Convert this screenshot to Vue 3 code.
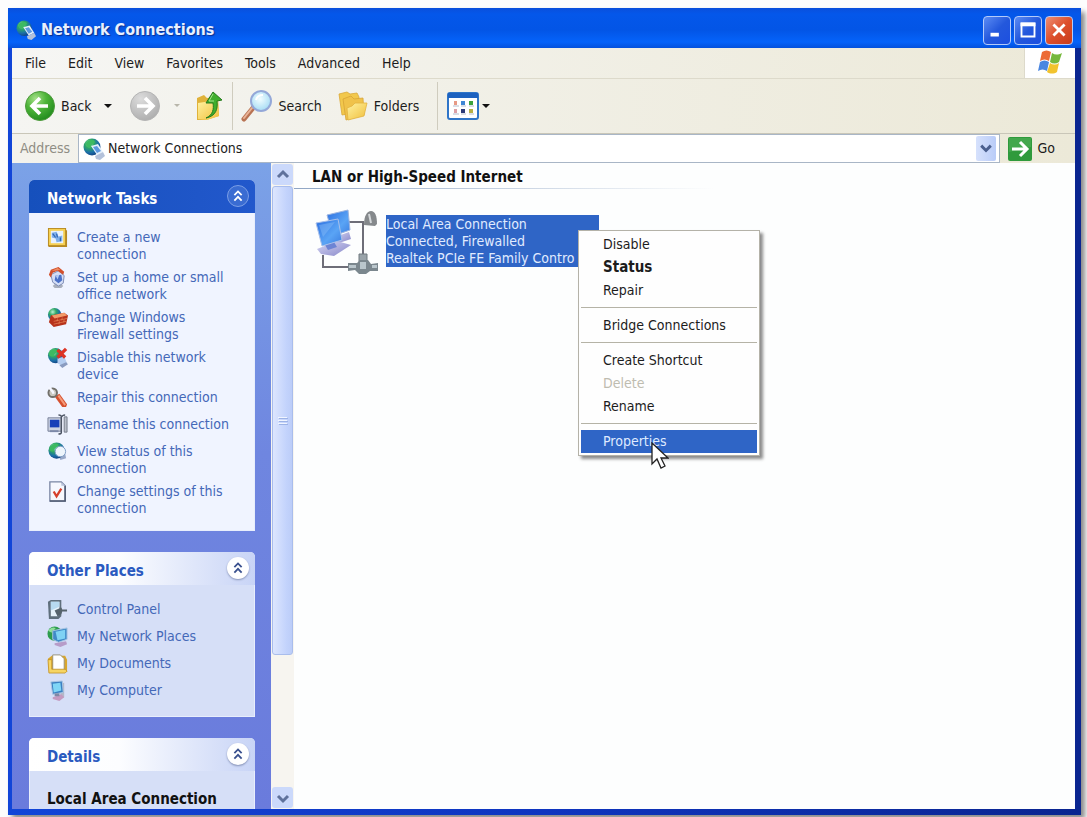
<script setup>
const menus = ['File', 'Edit', 'View', 'Favorites', 'Tools', 'Advanced', 'Help']

const tasks = [
  { icon: 'i-create', label: 'Create a new connection' },
  { icon: 'i-home', label: 'Set up a home or small office network' },
  { icon: 'i-firewall', label: 'Change Windows Firewall settings' },
  { icon: 'i-disable', label: 'Disable this network device' },
  { icon: 'i-repair', label: 'Repair this connection' },
  { icon: 'i-rename', label: 'Rename this connection' },
  { icon: 'i-status', label: 'View status of this connection' },
  { icon: 'i-settings', label: 'Change settings of this connection' },
]

const places = [
  { icon: 'i-control', label: 'Control Panel' },
  { icon: 'i-netplaces', label: 'My Network Places' },
  { icon: 'i-documents', label: 'My Documents' },
  { icon: 'i-computer', label: 'My Computer' },
]

const contextGroups = [
  [{ label: 'Disable' }, { label: 'Status', bold: true }, { label: 'Repair' }],
  [{ label: 'Bridge Connections' }],
  [{ label: 'Create Shortcut' }, { label: 'Delete', disabled: true }, { label: 'Rename' }],
  [{ label: 'Properties', active: true }],
]
</script>

<template>
  <div class="desktop">
    <svg class="defs" width="0" height="0" aria-hidden="true">
      <defs>
        <radialGradient id="g-globe" cx="35%" cy="30%" r="75%">
          <stop offset="0" stop-color="#b8f0d0" /><stop offset=".35" stop-color="#2fa865" />
          <stop offset=".7" stop-color="#1b6fa8" /><stop offset="1" stop-color="#123f80" />
        </radialGradient>
        <radialGradient id="g-green" cx="35%" cy="25%" r="80%">
          <stop offset="0" stop-color="#a6e08a" /><stop offset=".45" stop-color="#4fb53a" /><stop offset="1" stop-color="#1f8a1c" />
        </radialGradient>
        <radialGradient id="g-grey" cx="35%" cy="25%" r="80%">
          <stop offset="0" stop-color="#dcdcdc" /><stop offset="1" stop-color="#adadad" />
        </radialGradient>
        <linearGradient id="g-folder" x1="0" y1="0" x2="1" y2="1">
          <stop offset="0" stop-color="#fff2a0" /><stop offset="1" stop-color="#f0be3a" />
        </linearGradient>
        <linearGradient id="g-screen" x1="0" y1="0" x2="1" y2="1">
          <stop offset="0" stop-color="#2c6fe0" /><stop offset=".6" stop-color="#5aa4f5" /><stop offset="1" stop-color="#3a7ce0" />
        </linearGradient>
        <radialGradient id="g-lens" cx="45%" cy="40%" r="60%">
          <stop offset="0" stop-color="#f2fdff" /><stop offset="1" stop-color="#a6dcf5" />
        </radialGradient>
        <linearGradient id="g-base" x1="0" y1="0" x2="1" y2="1">
          <stop offset="0" stop-color="#d8d8f4" /><stop offset="1" stop-color="#8585c8" />
        </linearGradient>
      </defs>
      <symbol id="i-net" viewBox="0 0 22 22">
        <circle cx="9" cy="9" r="8.5" fill="url(#g-globe)" />
        <path d="M3 5c3-4 8-4 9-1-1 2-4 2-4 5-3 1-5 0-5-4z" fill="#3dba62" />
        <path d="M8 8l7-2 5 8-6 3z" fill="#e4f0fb" />
        <path d="M10 9l4-1 4 5-4 2z" fill="#5c98e0" />
        <path d="M12 18l8-4 2 4-5 4-4-1z" fill="#b3c1da" />
      </symbol>
      <symbol id="i-create" viewBox="0 0 22 22">
        <path d="M1 1h19v2l1 1v17H2L1 20z" fill="#b68a24" />
        <path d="M2 2h17v17H2z" fill="#f6d052" />
        <path d="M4 4h13v13H4z" fill="#e8f2fd" />
        <path d="M5 6l5-1 2 5 4-1v6l-6 1-1-4-4-1z" fill="#7fb0ea" />
        <path d="M6 7l3 4M10 7l1 4M14 11v4" stroke="#2f65b4" stroke-width="1.3" />
      </symbol>
      <symbol id="i-home" viewBox="0 0 22 22">
        <path d="M6 20l3-3h5l3 3-2 2H8z" fill="#a9afbc" />
        <path d="M4 8l8-4 6 5-1 8-5 3-6-4z" fill="#d4def6" stroke="#7e8cb2" />
        <path d="M9 9l6-1 1 6-4 3-4-3z" fill="#4a70c8" />
        <path d="M9 9l4-1-2 5z" fill="#b4ccf6" />
        <path d="M2 8l2-5 8-3 6 5-1 3-6-4-5 2-2 5z" fill="#d2502c" />
        <path d="M5 4l6-3 3 2-6 1z" fill="#ee8c64" />
      </symbol>
      <symbol id="i-firewall" viewBox="0 0 22 22">
        <circle cx="8" cy="8" r="7" fill="url(#g-globe)" />
        <path d="M4 9l14-3 4 3-2 9-13 3-5-5z" fill="#b7321b" />
        <path d="M5 9l13-3 3 3-13 3z" fill="#f39a68" />
        <path d="M7 15l14-3M7 18l13-3M11 12l-.5 3M16 11l-.5 3M13 15l-.5 3M18 13l-.5 3" stroke="#e88a5c" stroke-width=".7" />
      </symbol>
      <symbol id="i-disable" viewBox="0 0 22 22">
        <circle cx="9" cy="9" r="8" fill="url(#g-globe)" />
        <path d="M2 6c3-5 8-4 9-2-1 3-4 3-4 6-3 0-5 0-5-4z" fill="#3dba62" />
        <path d="M11 12l7-2 3 7-5 3-5-3z" fill="#b5cdf0" />
        <path d="M13 19l7-3 2 2-6 4z" fill="#8a9bc0" />
        <path d="M11 3l8 8M20 2l-9 9" stroke="#dd3324" stroke-width="3.4" />
      </symbol>
      <symbol id="i-repair" viewBox="0 0 22 22">
        <path d="M8 10l5-3 8 11-1 3-4 0z" fill="#d5502f" />
        <path d="M12 9l7 10" stroke="#f59b7a" stroke-width="2" />
        <circle cx="6" cy="6" r="4.5" fill="#c9c7c0" stroke="#716f6a" stroke-width="2" />
        <path d="M2 0l4 5 1 2" fill="none" stroke="#f4f6ff" stroke-width="2.6" />
      </symbol>
      <symbol id="i-rename" viewBox="0 0 22 22">
        <path d="M1 4h14v14H1z" fill="#ccd2e0" stroke="#777f98" />
        <path d="M3 6h10v8H3z" fill="#173fb8" />
        <path d="M3 17h9v2H3z" fill="#7c88a8" />
        <path d="M18 3h3v16h-3z" fill="#b9bfca" stroke="#737a88" />
        <path d="M12 1c2 0 3 0 3 2v16c0 2-1 2-3 2M19 1c-2 0-3 0-3 2" fill="none" stroke="#4c5464" stroke-width="1.6" />
      </symbol>
      <symbol id="i-status" viewBox="0 0 22 22">
        <path d="M12 15l7-2 1 5-6 2z" fill="#98a8c8" />
        <circle cx="10" cy="10" r="8.5" fill="url(#g-globe)" />
        <path d="M3 7c3-5 8-5 9-3-1 3-5 3-5 7-3 0-5 0-4-4z" fill="#3dba62" />
        <circle cx="14" cy="11" r="5.5" fill="#edf5fc" stroke="#7d9cc4" />
      </symbol>
      <symbol id="i-settings" viewBox="0 0 22 22">
        <path d="M3 1h12l4 4v16H3z" fill="#f6f8fe" stroke="#7a86a4" stroke-width="1.4" />
        <path d="M19 5v16H3" fill="none" stroke="#4f5970" stroke-width="1.6" />
        <path d="M15 1v4h4z" fill="#b9c3da" />
        <path d="M7 11l3 5 5-8" fill="none" stroke="#d6402c" stroke-width="2.4" />
      </symbol>
      <symbol id="i-control" viewBox="0 0 22 22">
        <path d="M1 3l3-2h11v17l-3 3H2z" fill="#5f6f7c" />
        <path d="M4 3h9v13l-2 2H4z" fill="#e6f2fa" />
        <path d="M4 3h9v5l-9 4z" fill="#b7daf0" />
        <path d="M8 12l7-3 1 2h5v2h-5l-1 3-4 2z" fill="#56636c" />
      </symbol>
      <symbol id="i-netplaces" viewBox="0 0 22 22">
        <circle cx="8" cy="8" r="7.5" fill="#2c9c4e" />
        <path d="M1 5c3-4 6-4 8-3-1 3-4 2-4 5z" fill="#8fdd9a" />
        <path d="M6 5l15-3v12l-9 3-6-3z" fill="#3f8ac8" stroke="#a8c4e2" />
        <path d="M9 6l10-2v9l-8 2z" fill="#7fd2f4" />
        <path d="M8 18l12-2 1 3-7 3-6-2z" fill="#b79cc8" />
      </symbol>
      <symbol id="i-documents" viewBox="0 0 22 22">
        <path d="M1 6l4-3h14l2 4v13H2z" fill="#d9a62c" />
        <path d="M6 2h8l4 4v12H6z" fill="#fff" stroke="#98927a" />
        <path d="M1 7h4v10h14l2 2-2 2H2z" fill="#f6d564" stroke="#c08e20" stroke-width=".8" />
      </symbol>
      <symbol id="i-computer" viewBox="0 0 22 22">
        <path d="M14 4l4-1v15l-4 2z" fill="#b4b8c8" />
        <path d="M4 2l12-1 1 12-11 2z" fill="#3b80c2" stroke="#a9c6e4" />
        <path d="M6 4l8-1 1 8-8 2z" fill="#7fd6f6" />
        <path d="M6 18l9-3 3 3-5 4-7-2z" fill="#c49ac0" />
        <path d="M8 14h5v3H8z" fill="#7f88a4" />
      </symbol>
      <symbol id="i-chevrons" viewBox="0 0 22 22">
        <path d="M7 10l4-4 4 4M7 16l4-4 4 4" fill="none" stroke="currentColor" stroke-width="2" />
      </symbol>
    </svg>

    <div class="window">
      <header class="titlebar">
        <svg class="title-icon" viewBox="0 0 22 22" aria-hidden="true"><use href="#i-net" /></svg>
        <h1>Network Connections</h1>
        <div class="controls">
          <button type="button" class="ctl" aria-label="Minimize">
            <svg viewBox="0 0 28 28"><path d="M7 17h9v4H7z" fill="#fff" /></svg>
          </button>
          <button type="button" class="ctl" aria-label="Maximize">
            <svg viewBox="0 0 28 28"><path d="M7 7h14v14H7z" fill="none" stroke="#fff" stroke-width="2" /><path d="M6 6h16v4H6z" fill="#fff" /></svg>
          </button>
          <button type="button" class="ctl close" aria-label="Close">
            <svg viewBox="0 0 28 28"><path d="M8 8l12 12M20 8L8 20" stroke="#fff" stroke-width="3" /></svg>
          </button>
        </div>
      </header>

      <div class="client">
        <nav class="menubar">
          <button v-for="m in menus" :key="m" type="button">{{ m }}</button>
          <div class="flag">
            <svg viewBox="0 0 26 24" aria-hidden="true">
              <path d="M5 2c3-2 6-2 9 0l-2 9c-3-2-6-2-9 0z" fill="#ec6a35" />
              <path d="M15 3c3 2 6 2 10 0l-3 9c-3 2-6 2-9 0z" fill="#76b83c" />
              <path d="M3 12c3-2 6-2 9 0l-2 9c-3-2-6-2-9 0z" fill="#4a86e0" />
              <path d="M13 13c3 2 6 2 9 0l-2 9c-3 2-7 2-10 0z" fill="#f2c32e" />
            </svg>
          </div>
        </nav>

        <div class="toolbar">
          <button type="button" class="tool">
            <svg class="round" viewBox="0 0 30 30" aria-hidden="true">
              <circle cx="15" cy="15" r="14.5" fill="url(#g-green)" stroke="#4e9a3c" />
              <path d="M15 7l-8 8 8 8M7 15h16" fill="none" stroke="#fff" stroke-width="3.6" />
            </svg>
            <span>Back</span>
          </button>
          <button type="button" class="tool arrow back-arrow" aria-label="Back history">
            <svg viewBox="0 0 8 6"><path d="M0 1h8L4 5z" fill="#111" /></svg>
          </button>
          <button type="button" class="tool forward" aria-label="Forward" disabled>
            <svg class="round" viewBox="0 0 30 30">
              <circle cx="15" cy="15" r="14.5" fill="url(#g-grey)" stroke="#b4b4b4" />
              <path d="M15 7l8 8-8 8M23 15H7" fill="none" stroke="#fff" stroke-width="3.6" />
            </svg>
          </button>
          <button type="button" class="tool arrow forward-arrow" aria-label="Forward history" disabled>
            <svg viewBox="0 0 8 6"><path d="M1 1h6L4 4z" fill="#b8b6aa" /></svg>
          </button>
          <button type="button" class="tool up" aria-label="Up">
            <svg class="up-icon" viewBox="0 0 26 30">
              <path d="M1 7l7-3 3 3 11-2 1 20-13 4-9 0z" fill="#e0b23a" />
              <path d="M2 12l13-2 7 0 1 15-12 4-9-1z" fill="url(#g-folder)" />
              <path d="M10 27c7-3 8-9 7-15h-7L17 1l9 8-5 1c1 8-1 15-11 17z" fill="#3fae2e" stroke="#257a1c" />
              <path d="M17 3l-4 7h5" fill="none" stroke="#a6e38c" />
            </svg>
          </button>
          <span class="divider" />
          <button type="button" class="tool">
            <svg class="search-icon" viewBox="0 0 32 32" aria-hidden="true">
              <path d="M12 18L3 29" stroke="#b87353" stroke-width="5" stroke-linecap="round" />
              <path d="M11 18L3 28" stroke="#eab497" stroke-width="2" stroke-linecap="round" />
              <circle cx="20" cy="11" r="10" fill="url(#g-lens)" stroke="#94a8d8" stroke-width="2" />
              <path d="M15 10c1-4 4-5 7-5" fill="none" stroke="#fff" stroke-width="2" />
            </svg>
            <span>Search</span>
          </button>
          <button type="button" class="tool folders">
            <svg class="round" viewBox="0 0 30 30" aria-hidden="true">
              <path d="M1 3l8-2 3 2 7-1 2 4-1 15-16 3z" fill="#f2c84c" stroke="#dba93a" stroke-width=".8" />
              <path d="M5 8l8-3 3 3 9-1 1 17-18 5z" fill="#f0c24a" stroke="#d8a436" stroke-width=".8" />
              <path d="M9 17l5-2 3-3 12 0-3 13-16 4z" fill="url(#g-folder)" stroke="#e2b240" stroke-width=".8" />
            </svg>
            <span>Folders</span>
          </button>
          <span class="divider wide" />
          <button type="button" class="tool views" aria-label="Views">
            <svg class="views-icon" viewBox="0 0 32 28">
              <rect x="1" y="1" width="30" height="26" rx="2" fill="#fff" stroke="#2f75c8" stroke-width="2" />
              <path d="M1 1h30v5H1z" fill="#1d62c0" />
              <path d="M7 9h3v4H7z" fill="#e79a86" /><path d="M14 9h4v4h-4z" fill="#3f86d4" /><path d="M22 9h4v4h-4z" fill="#3ca23c" />
              <path d="M7 17h3v4H7z" fill="#dca0a6" /><path d="M14 17h4v4h-4z" fill="#2b3a78" /><path d="M22 17h4v4h-4z" fill="#b7b045" />
              <path d="M6 14h6M14 14h5M22 14h5M6 22h6M14 22h5M22 22h5" stroke="#b4bccc" />
            </svg>
            <svg class="mini" viewBox="0 0 8 6"><path d="M0 1h8L4 5z" fill="#111" /></svg>
          </button>
        </div>

        <div class="addressbar">
          <label for="address">Address</label>
          <div class="field">
            <svg viewBox="0 0 22 22" aria-hidden="true"><use href="#i-net" /></svg>
            <input id="address" type="text" value="Network Connections" />
            <button type="button" class="drop" aria-label="Show addresses">
              <svg viewBox="0 0 20 26"><path d="M5 10l5 5 5-5" fill="none" stroke="#4a5f8e" stroke-width="3" /></svg>
            </button>
          </div>
          <button type="button" class="go">
            <svg viewBox="0 0 24 24" aria-hidden="true">
              <rect width="24" height="24" rx="2" fill="#2f9a3c" />
              <path d="M1 1h22v9L1 15z" fill="#58b45e" opacity=".5" />
              <path d="M12 5l7 7-7 7M19 12H4" fill="none" stroke="#fff" stroke-width="3" />
            </svg>
            <span>Go</span>
          </button>
        </div>

        <div class="content">
          <aside class="sidebar">
            <section class="pane primary">
              <header>
                <h2>Network Tasks</h2>
                <button type="button" class="fold" aria-label="Collapse Network Tasks"><svg viewBox="0 0 22 22"><use href="#i-chevrons" /></svg></button>
              </header>
              <ul>
                <li v-for="t in tasks" :key="t.label">
                  <svg viewBox="0 0 22 22" aria-hidden="true"><use :href="'#' + t.icon" /></svg>
                  <a href="#">{{ t.label }}</a>
                </li>
              </ul>
            </section>

            <section class="pane">
              <header>
                <h2>Other Places</h2>
                <button type="button" class="fold" aria-label="Collapse Other Places"><svg viewBox="0 0 22 22"><use href="#i-chevrons" /></svg></button>
              </header>
              <ul>
                <li v-for="p in places" :key="p.label">
                  <svg viewBox="0 0 22 22" aria-hidden="true"><use :href="'#' + p.icon" /></svg>
                  <a href="#">{{ p.label }}</a>
                </li>
              </ul>
            </section>

            <section class="pane">
              <header>
                <h2>Details</h2>
                <button type="button" class="fold" aria-label="Collapse Details"><svg viewBox="0 0 22 22"><use href="#i-chevrons" /></svg></button>
              </header>
              <p class="detail">Local Area Connection</p>
            </section>
          </aside>

          <div class="scrollbar">
            <button type="button" aria-label="Scroll up">
              <svg viewBox="0 0 20 20"><path d="M5 12l5-5 5 5" fill="none" stroke="#5f729c" stroke-width="3" /></svg>
            </button>
            <div class="track">
              <div class="thumb"><i /><i /><i /></div>
            </div>
            <button type="button" aria-label="Scroll down">
              <svg viewBox="0 0 20 20"><path d="M5 8l5 5 5-5" fill="none" stroke="#5f729c" stroke-width="3" /></svg>
            </button>
          </div>

          <main>
            <h2 class="group">LAN or High-Speed Internet</h2>
            <div class="connection">
              <svg class="lan" viewBox="0 0 66 66" aria-hidden="true">
                <path d="M34 13h14v35M8 46v12h28" fill="none" stroke="#6e6e78" stroke-width="2" />
                <path d="M49 16c0-9 3-14 7-14s6 5 6 13l-2 2z" fill="#85898c" />
                <path d="M54 5l2 9" stroke="#d4d8da" stroke-width="2" />
                <path d="M20 28l14-5 2 7-12 4z" fill="url(#g-base)" />
                <path d="M12 6l21-5 2 20-17 6z" fill="url(#g-screen)" stroke="#9cb4e0" />
                <path d="M2 40l20-8 14 4-17 11-13-2z" fill="url(#g-base)" />
                <path d="M10 36l9-3 3 5-9 3z" fill="#6d84d4" />
                <path d="M1 14l22-4 4 21-20 6z" fill="url(#g-screen)" stroke="#a9c0ea" />
                <path d="M4 16l16-3-12 15z" fill="#8fc4fb" opacity=".4" />
                <path d="M44 45h8v10h-8z" fill="#9aa4aa" stroke="#717a80" />
                <path d="M33 54l9 0 3-3h8l3 4 7-1v8l-8 0-4 3h-7l-4-4-7 1z" fill="#7b878e" />
                <path d="M34 56h7v3h-7zM45 53h6v7h-6zM57 56h5v3h-5z" fill="#bac6cc" />
              </svg>
              <div class="selected">
                <span>Local Area Connection</span>
                <span>Connected, Firewalled</span>
                <span>Realtek PCIe FE Family Contro</span>
              </div>
            </div>

            <div class="context" role="menu">
              <div v-for="(group, gi) in contextGroups" :key="gi" class="context-group">
                <button
                  v-for="item in group"
                  :key="item.label"
                  type="button"
                  role="menuitem"
                  :disabled="item.disabled"
                  :class="{ bold: item.bold, active: item.active }"
                >{{ item.label }}</button>
              </div>
              <svg class="pointer" viewBox="0 0 18 28" aria-hidden="true">
                <path d="M1 1v21l5-5 4 9 4-2-4-8h7z" fill="#fff" stroke="#222" stroke-width="1.3" />
              </svg>
            </div>
          </main>
        </div>
      </div>
    </div>
  </div>
</template>

<style>
body {
  margin: 0;
  background: #fdfdfd;
}
</style>

<style scoped>
* {
  box-sizing: border-box;
}
.desktop {
  height: 100vh;
  padding: 8px 6px 2px 8px;
  overflow: hidden;
  font-family: "DejaVu Sans Condensed", "DejaVu Sans", "Noto Sans", sans-serif;
  font-size: 14px;
  line-height: 17px;
  color: #1c1c1c;
}
.defs {
  position: absolute;
}
button {
  display: flex;
  align-items: center;
  margin: 0;
  padding: 0;
  border: 0;
  background: none;
  font: inherit;
  color: inherit;
  white-space: nowrap;
}
svg {
  display: block;
  flex: none;
}
h1, h2, p, ul {
  margin: 0;
  padding: 0;
}
.window {
  display: flex;
  flex-direction: column;
  height: 100%;
  padding: 0 6px 6px 4px;
  background: linear-gradient(90deg, #1145d8, #0f35c0 50%, #0a2590);
  box-shadow: 4px 4px 5px #8a8a8a;
}
.titlebar {
  display: flex;
  align-items: center;
  height: 40px;
  flex: none;
  margin: 0 -6px 0 -4px;
  padding: 4px 8px 0;
  background: linear-gradient(180deg, #0a4fdc 0, #0457ea 15%, #0355e6 55%, #0563fa 85%, #0451dc 100%);
}
.title-icon {
  width: 20px;
  height: 20px;
}
.titlebar h1 {
  flex: 1;
  margin-left: 5px;
  font-size: 16px;
  line-height: 22px;
  color: #e8f0ff;
  text-shadow: 1px 1px 1px #0a2f90;
}
.controls {
  display: flex;
  gap: 3px;
}
.ctl {
  width: 28px;
  height: 29px;
  justify-content: center;
  border: 1px solid #b4cbfa;
  border-radius: 4px;
  background: linear-gradient(135deg, #5c8cf4, #2458dc 50%, #1c4fe0);
}
.ctl svg {
  width: 26px;
  height: 26px;
}
.ctl.close {
  background: linear-gradient(135deg, #ee8f74, #dd4f2c 50%, #c83c1c);
}
.client {
  display: flex;
  flex-direction: column;
  flex: 1;
  min-height: 0;
  background: #efede2;
}
.menubar {
  display: flex;
  align-items: stretch;
  height: 31px;
  flex: none;
  gap: 22px;
  padding-left: 13px;
  background: linear-gradient(90deg, #f6f6f4, #ece9d8);
  border-bottom: 1px solid #dddacb;
}
.flag {
  display: flex;
  justify-content: center;
  width: 51px;
  margin-left: auto;
  padding-top: 2px;
  background: #fff;
  border-left: 1px solid #dddacb;
}
.flag svg {
  width: 26px;
  height: 24px;
}
.toolbar {
  display: flex;
  align-items: center;
  height: 55px;
  flex: none;
  padding-left: 13px;
  background: linear-gradient(90deg, #f5f5f2, #ece9d8);
  border-bottom: 1px solid #c9c6b8;
}
.tool {
  gap: 6px;
}
.round {
  width: 30px;
  height: 30px;
}
.arrow svg, .mini {
  width: 8px;
  height: 6px;
}
.back-arrow {
  margin-left: 12px;
}
.forward {
  margin-left: 18px;
}
.forward-arrow {
  margin-left: 13px;
}
.up {
  margin-left: 15px;
}
.up-icon {
  width: 26px;
  height: 30px;
}
.divider {
  width: 1px;
  height: 48px;
  margin: 0 8px 0 10px;
  background: #cfccbe;
}
.divider.wide {
  margin: 0 9px 0 18px;
}
.search-icon {
  width: 32px;
  height: 32px;
}
.folders {
  margin-left: 16px;
}
.views {
  gap: 3px;
}
.views-icon {
  width: 32px;
  height: 28px;
}
.addressbar {
  display: flex;
  align-items: center;
  height: 29px;
  flex: none;
  padding: 0 20px 0 8px;
  background: linear-gradient(90deg, #f3f2ec, #ece9d8);
}
.addressbar label {
  width: 58px;
  color: #8f8d84;
}
.field {
  display: flex;
  align-items: center;
  flex: 1;
  height: 29px;
  padding: 1px 3px 1px 4px;
  border: 1px solid #a9b6c6;
  background: #fff;
}
.field svg {
  width: 22px;
  height: 22px;
}
.field input {
  flex: 1;
  min-width: 0;
  padding: 0 0 0 3px;
  border: 0;
  outline: 0;
  background: none;
  font: inherit;
  color: #1c1c1c;
}
.drop {
  width: 20px;
  height: 25px;
  border-radius: 2px;
  background: linear-gradient(90deg, #d6e1fc, #b9ccf8);
}
.field .drop svg {
  width: 20px;
  height: 25px;
}
.go {
  gap: 6px;
  margin-left: 8px;
}
.go svg {
  width: 24px;
  height: 24px;
}
.content {
  display: flex;
  flex: 1;
  min-height: 0;
  background: #fdfefe;
}
.sidebar {
  display: flex;
  flex-direction: column;
  flex: none;
  width: 259px;
  gap: 21px;
  padding: 17px 16px 0 17px;
  overflow: hidden;
  background: linear-gradient(180deg, #7ba2e7, #6f86e0 45%, #6a7bdc);
}
.pane {
  flex: none;
  background: #d6dff7;
  border: 1px solid #e8eefc;
  border-top: 0;
  border-radius: 5px 5px 0 0;
}
.pane header {
  display: flex;
  align-items: center;
  justify-content: space-between;
  height: 33px;
  margin: 0 -1px;
  padding: 4px 6px 0 18px;
  border-radius: 5px 5px 0 0;
  background: linear-gradient(90deg, #fff 0, #fcfdff 40%, #c8d4f6 100%);
}
.pane h2 {
  font-size: 15px;
  line-height: 18px;
  color: #2a5ac0;
}
.fold {
  width: 22px;
  height: 22px;
  margin-bottom: 6px;
  justify-content: center;
  border-radius: 50%;
  background: #fff;
  box-shadow: 0 1px 2px #8793b8;
  color: #39508e;
}
.fold svg {
  width: 20px;
  height: 20px;
}
.primary {
  background: #f0f4ff;
}
.primary header {
  background: linear-gradient(90deg, #1650bc, #2258cc);
}
.primary h2 {
  color: #fff;
}
.primary .fold {
  background: #3a6cd2;
  border: 1px solid #7b9ee6;
  box-shadow: none;
  color: #fff;
}
.pane ul {
  display: flex;
  flex-direction: column;
  gap: 6px;
  padding: 14px 23px 15px 17px;
  list-style: none;
}
.pane li {
  display: flex;
  gap: 9px;
  min-height: 21px;
}
.pane li svg {
  width: 21px;
  height: 21px;
}
.pane li a {
  padding-top: 2px;
  margin-bottom: -2px;
  color: #4468b8;
  text-decoration: none;
}
.detail {
  padding: 19px 17px;
  font-size: 15px;
  line-height: 18px;
  font-weight: bold;
  color: #111;
  white-space: nowrap;
}
.scrollbar {
  display: flex;
  flex-direction: column;
  flex: none;
  width: 23px;
  padding: 1px;
  background: #f7f5f0;
}
.scrollbar button {
  justify-content: center;
  height: 21px;
  border-radius: 3px;
  background: #cbd9fb;
}
.scrollbar button svg {
  width: 20px;
  height: 20px;
}
.track {
  flex: 1;
  padding-top: 1px;
}
.thumb {
  display: flex;
  flex-direction: column;
  align-items: center;
  justify-content: center;
  gap: 2px;
  height: 78%;
  border: 1px solid #a9bdec;
  border-radius: 3px;
  background: linear-gradient(90deg, #dde6fe, #c3d3fc 70%, #bccdf8);
}
.thumb i {
  width: 9px;
  height: 1px;
  background: #f0f5ff;
  box-shadow: 1px 1px 0 #9db3e6;
}
main {
  position: relative;
  flex: 1;
  min-width: 0;
}
.group {
  height: 26px;
  padding: 5px 0 0 18px;
  font-size: 15px;
  line-height: 18px;
  color: #111;
  border-bottom: 1px solid;
  border-image: linear-gradient(90deg, #8fa5c4, #fdfefe 420px) 1;
}
.connection {
  display: flex;
  align-items: flex-start;
  padding: 20px 0 0 21px;
}
.lan {
  width: 66px;
  height: 66px;
}
.selected {
  display: flex;
  flex-direction: column;
  width: 213px;
  margin: 6px 0 0 5px;
  padding-top: 1px;
  background: #2f65c6;
  color: #e0ebff;
  white-space: nowrap;
}
.context {
  position: absolute;
  top: 67px;
  left: 284px;
  width: 182px;
  padding: 2px;
  border: 1px solid #b4b2a8;
  background: #fefefe;
  box-shadow: 3px 3px 3px #8c8c8c;
}
.context-group + .context-group {
  margin-top: 5px;
  padding-top: 6px;
  border-top: 1px solid #b5b3a6;
}
.context-group button {
  width: 100%;
  height: 23px;
  padding-left: 22px;
}
.context-group .bold {
  font-size: 15px;
  font-weight: bold;
}
.context-group .active {
  background: #2f65c6;
  color: #dfeaff;
}
.context-group button:disabled {
  color: #bebcb0;
}
.pointer {
  position: absolute;
  left: 72px;
  top: 211px;
  width: 18px;
  height: 28px;
}
</style>
